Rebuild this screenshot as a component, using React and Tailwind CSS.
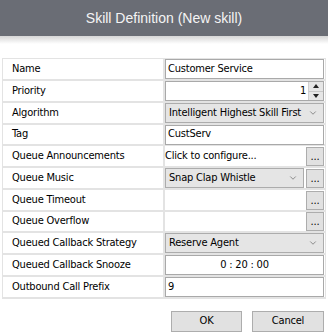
import { ChevronDown } from 'lucide-react'

const font = { fontFamily: '"DejaVu Sans Condensed", "DejaVu Sans", sans-serif' }

function TextBox({ children, align = 'left' }) {
    return (
        <div className={`h-[20px] w-full border border-[#a9a9a9] bg-white flex items-center px-[2px] ${align === 'center' ? 'justify-center' : ''}`}>
            {children}
        </div>
    )
}

function DotsButton() {
    return (
        <div className="h-[19px] w-[18px] shrink-0 border border-[#adadad] bg-[#e1e1e1] flex items-end justify-center pb-[3px] text-[11px] leading-none">
            ...
        </div>
    )
}

function Select({ value }) {
    return (
        <div className="h-[20px] flex-1 border border-[#acacac] bg-[#e5e5e5] flex items-center justify-between pl-[3px] pr-[5px]">
            <span className="whitespace-nowrap">{value}</span>
            <ChevronDown className="w-[10px] h-[10px] shrink-0 text-[#555]" strokeWidth={1.5} />
        </div>
    )
}

function Spinner() {
    return (
        <div className="h-[20px] w-full border border-[#a9a9a9] bg-white flex items-center justify-end">
            <span className="pr-[2px]">1</span>
            <div className="h-full w-[15px] flex flex-col border-l border-[#d0d0d0]">
                <div className="flex-1 bg-[#e6e6e6] border-b border-[#c8c8c8] flex items-center justify-center">
                    <div className="w-0 h-0 border-l-[3px] border-r-[3px] border-b-[4px] border-l-transparent border-r-transparent border-b-[#222]" />
                </div>
                <div className="flex-1 bg-[#e6e6e6] flex items-center justify-center">
                    <div className="w-0 h-0 border-l-[3px] border-r-[3px] border-t-[4px] border-l-transparent border-r-transparent border-t-[#222]" />
                </div>
            </div>
        </div>
    )
}

const rows = [
    { label: 'Name', value: <TextBox>Customer Service</TextBox> },
    { label: 'Priority', value: <Spinner /> },
    { label: 'Algorithm', value: <Select value="Intelligent Highest Skill First" /> },
    { label: 'Tag', value: <TextBox>CustServ</TextBox>, short: true },
    {
        label: 'Queue Announcements',
        value: (
            <div className="flex items-center w-full">
                <span className="flex-1 whitespace-nowrap">Click to configure...</span>
                <DotsButton />
            </div>
        ),
    },
    {
        label: 'Queue Music',
        value: (
            <div className="flex items-center w-full gap-[2px]">
                <Select value="Snap Clap Whistle" />
                <DotsButton />
            </div>
        ),
    },
    { label: 'Queue Timeout', value: <div className="flex w-full justify-end"><DotsButton /></div> },
    { label: 'Queue Overflow', value: <div className="flex w-full justify-end"><DotsButton /></div>, short: true },
    { label: 'Queued Callback Strategy', value: <div className="flex w-full"><Select value="Reserve Agent" /></div> },
    { label: 'Queued Callback Snooze', value: <TextBox align="center">0 : 20 : 00</TextBox> },
    { label: 'Outbound Call Prefix', value: <TextBox>9</TextBox> },
]

export default function App() {
    return (
        <div className="w-[328px] h-[334px] bg-white overflow-hidden text-[11px] tracking-[-0.2px] text-black" style={font}>
            <div className="h-[36px] bg-[#6a6d75] flex items-center justify-center text-[#f4f4f4] text-[14px] tracking-normal" style={{ fontFamily: '"Liberation Sans", sans-serif' }}>
                Skill Definition (New skill)
            </div>
            <div className="h-[8px] bg-gradient-to-b from-[#d6d6d6] to-white" />

            <div className="mt-[14px] mx-[2px] border-t border-l border-[#e3e3e3]">
                {rows.map((row) => (
                    <div key={row.label} className={`flex ${row.short ? 'h-[21px]' : 'h-[22px]'}`}>
                        <div className="w-[162px] shrink-0 border-r-2 border-b-2 border-[#e3e3e3] flex items-center pl-[9px]">
                            {row.label}
                        </div>
                        <div className="flex-1 border-r border-b-2 border-[#e3e3e3] flex items-center pr-[1px]">
                            {row.value}
                        </div>
                    </div>
                ))}
            </div>

            <div className="flex justify-end gap-[10px] pr-[4px] mt-[12px]">
                <button className="w-[71px] h-[21px] border border-[#adadad] bg-[#e1e1e1]">OK</button>
                <button className="w-[72px] h-[21px] border border-[#adadad] bg-[#e1e1e1]">Cancel</button>
            </div>
        </div>
    )
}
